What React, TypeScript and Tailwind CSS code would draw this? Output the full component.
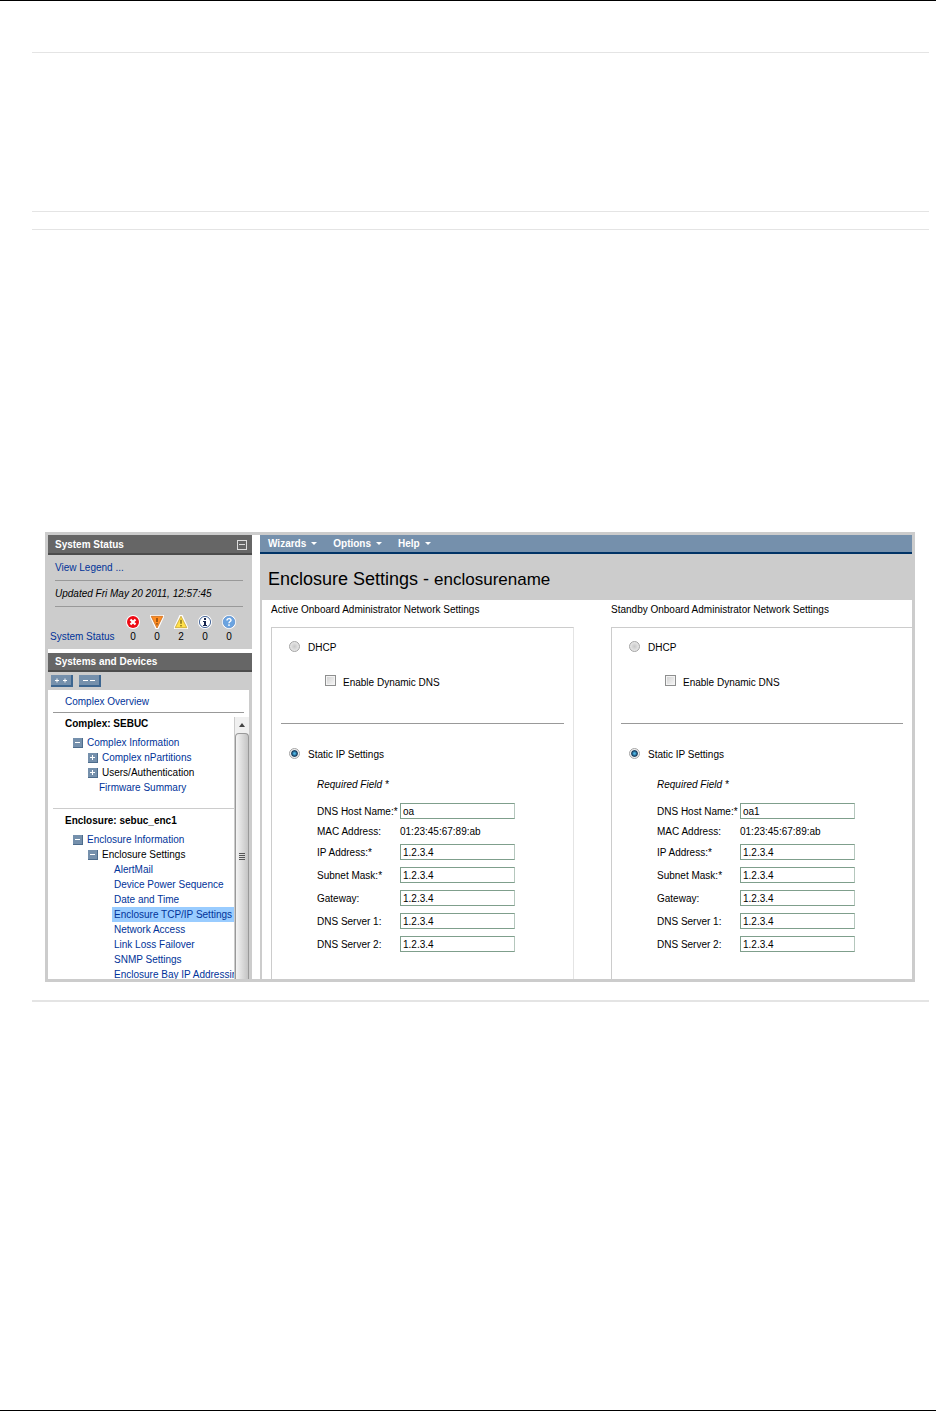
import { useState } from 'react';
import type { ReactNode } from 'react';

const fields = [
  { key: 'ip', label: 'IP Address:*' },
  { key: 'mask', label: 'Subnet Mask:*' },
  { key: 'gateway', label: 'Gateway:' },
  { key: 'dns1', label: 'DNS Server 1:' },
  { key: 'dns2', label: 'DNS Server 2:' },
];

const settingsLinks = [
  'AlertMail',
  'Device Power Sequence',
  'Date and Time',
  'Enclosure TCP/IP Settings',
  'Network Access',
  'Link Loss Failover',
  'SNMP Settings',
  'Enclosure Bay IP Addressing',
];

const statuses = [
  { name: 'Critical', count: 0, icon: <CriticalIcon /> },
  { name: 'Major', count: 0, icon: <MajorIcon /> },
  { name: 'Minor', count: 2, icon: <MinorIcon /> },
  { name: 'Informational', count: 0, icon: <InfoIcon /> },
  { name: 'Unknown', count: 0, icon: <UnknownIcon /> },
];

function CriticalIcon() {
  return (
    <svg width="14" height="14" viewBox="0 0 14 14" className="mx-auto block">
      <circle cx="7" cy="7" r="7" fill="#fff" />
      <circle cx="7" cy="7" r="6" fill="#ee0a14" />
      <path d="M4.5 4.5l5 5M9.5 4.5l-5 5" stroke="#fff" strokeWidth="2.2" />
    </svg>
  );
}

function MajorIcon() {
  return (
    <svg width="14" height="14" viewBox="0 0 14 14" className="mx-auto block">
      <path d="M0 0h14v2L8.5 14h-3L0 2z" fill="#fff" />
      <path d="M1.2 1.3h11.6L7 13z" fill="#ff8c22" stroke="#c86a1c" strokeWidth="0.8" />
      <path d="M7 3v4M7 8.2v1.4" stroke="#4a2400" strokeWidth="1" />
    </svg>
  );
}

function MinorIcon() {
  return (
    <svg width="14" height="14" viewBox="0 0 14 14" className="mx-auto block">
      <path d="M5.5 0h3L14 12v2H0v-2z" fill="#fff" />
      <path d="M7 1.2L12.8 12.7H1.2z" fill="#ffe04a" stroke="#c4a030" strokeWidth="0.8" />
      <path d="M7 4.8v4M7 10v1.4" stroke="#4a3c00" strokeWidth="1" />
    </svg>
  );
}

function InfoIcon() {
  return (
    <svg width="14" height="14" viewBox="0 0 14 14" className="mx-auto block">
      <circle cx="7" cy="7" r="7" fill="#fff" />
      <circle cx="7" cy="7" r="5.6" fill="#fff" stroke="#4a6a9c" strokeWidth="1" />
      <path d="M6 3h2v2H6zM5 6h3v4h1v1H5v-1h1V7H5z" fill="#16254d" />
    </svg>
  );
}

function UnknownIcon() {
  return (
    <svg width="14" height="14" viewBox="0 0 14 14" className="mx-auto block">
      <circle cx="7" cy="7" r="7" fill="#fff" />
      <circle cx="7" cy="7" r="5.8" fill="#6aa3e0" stroke="#4a80c4" strokeWidth="0.6" />
      <path d="M5 5.4C5 3 9 3 9 5.2 9 6.6 7 6.5 7 8.3M7 9.3v1.6" fill="none" stroke="#fff" strokeWidth="1.4" />
    </svg>
  );
}

function Toggle({ open, label }: { open?: boolean; label: string }) {
  return (
    <button
      aria-label={label}
      className="flex size-[10px] shrink-0 items-center justify-center border-r border-b border-[#4d6c8c] bg-[#7590ac]"
    >
      <svg width="7" height="7" viewBox="0 0 7 7">
        <path d={open ? 'M1 3.5h5' : 'M1 3.5h5M3.5 1v5'} stroke="#fff" strokeWidth="1" />
      </svg>
    </button>
  );
}

function TreeLink({ children, black }: { children: ReactNode; black?: boolean }) {
  return (
    <a href="#" className={`whitespace-nowrap ${black ? 'text-black' : 'text-[#003399]'}`}>
      {children}
    </a>
  );
}

function SystemStatus() {
  return (
    <section className="bg-[#ccc] pb-[5px]">
      <div className="flex h-5 items-center justify-between border-b-2 border-[#4c4c4c] bg-[#666] pt-px pr-[5px] pl-[7px]">
        <h2 className="font-bold text-white">System Status</h2>
        <button
          aria-label="Collapse"
          className="flex size-[10px] items-center justify-center border border-[#ddd]"
        >
          <span className="h-px w-[6px] bg-[#ddd]" />
        </button>
      </div>
      <div className="mr-[9px] ml-[7px]">
        <p className="h-[26px] border-b border-[#999] pt-[7px]">
          <TreeLink>View Legend ...</TreeLink>
        </p>
        <p className="h-[26px] border-b border-[#999] pt-[7px] italic">Updated Fri May 20 2011, 12:57:45</p>
      </div>
      <table className="mt-[7px] w-[193px] table-fixed text-center">
        <thead>
          <tr className="h-4">
            <td className="w-[73px]" />
            {statuses.map((s) => (
              <th key={s.name} aria-label={s.name} className="p-0">
                {s.icon}
              </th>
            ))}
          </tr>
        </thead>
        <tbody>
          <tr className="h-[14px]">
            <th className="pl-[2px] text-left font-normal">
              <TreeLink>System Status</TreeLink>
            </th>
            {statuses.map((s) => (
              <td key={s.name} className="p-0">
                {s.count}
              </td>
            ))}
          </tr>
        </tbody>
      </table>
    </section>
  );
}

function Scrollbar() {
  return (
    <div className="flex w-[15px] shrink-0 flex-col border-l border-[#ccc] bg-[#f0f0f0]">
      <button aria-label="Scroll up" className="flex h-4 items-center justify-center">
        <svg width="6" height="4" viewBox="0 0 6 4">
          <path d="M3 0l3 4H0z" fill="#444" />
        </svg>
      </button>
      <div className="flex flex-1 items-center justify-center rounded-t-sm border border-b-0 border-[#999] bg-linear-to-r from-[#f4f4f4] to-[#c4c4c4]">
        <div className="flex w-[6px] flex-col gap-px">
          <span className="h-px bg-[#555]" />
          <span className="h-px bg-[#555]" />
          <span className="h-px bg-[#555]" />
          <span className="h-px bg-[#555]" />
        </div>
      </div>
    </div>
  );
}

function DeviceTree() {
  return (
    <section className="flex min-h-0 flex-1 flex-col bg-[#ccc]">
      <div className="flex h-[19px] shrink-0 items-center border-b-2 border-[#4c4c4c] bg-[#666] pl-[7px]">
        <h2 className="font-bold text-white">Systems and Devices</h2>
      </div>
      <div className="flex h-[18px] shrink-0 items-center gap-[6px] pl-[3px]">
        <button
          aria-label="Expand all"
          className="flex h-3 w-[22px] items-center justify-center border-r-2 border-b-2 border-[#3d6690] bg-[#7590ac]"
        >
          <svg width="14" height="5" viewBox="0 0 14 5">
            <path d="M1 2.5h4M3 .5v4M9 2.5h4M11 .5v4" stroke="#fff" />
          </svg>
        </button>
        <button
          aria-label="Collapse all"
          className="flex h-3 w-[22px] items-center justify-center border-r-2 border-b-2 border-[#3d6690] bg-[#7590ac]"
        >
          <svg width="14" height="5" viewBox="0 0 14 5">
            <path d="M1 2.5h5M8 2.5h5" stroke="#fff" />
          </svg>
        </button>
      </div>
      <div className="mr-[3px] flex min-h-0 flex-1 flex-col bg-white pl-[5px]">
        <div className="mr-[5px] h-[23px] shrink-0 border-b border-[#999] pt-[6px] pl-3">
          <TreeLink>Complex Overview</TreeLink>
        </div>
        <div className="mt-1 flex min-h-0 flex-1">
          <nav className="flex min-w-0 flex-1 flex-col overflow-hidden">
            <h3 className="h-[18px] shrink-0 pt-px pl-3 text-[10px] font-bold">Complex: SEBUC</h3>
            <div className="flex h-[15px] shrink-0 items-center gap-1 pl-5">
              <Toggle open label="Collapse Complex Information" />
              <TreeLink>Complex Information</TreeLink>
            </div>
            <div className="flex h-[15px] shrink-0 items-center gap-1 pl-[35px]">
              <Toggle label="Expand Complex nPartitions" />
              <TreeLink>Complex nPartitions</TreeLink>
            </div>
            <div className="flex h-[15px] shrink-0 items-center gap-1 pl-[35px]">
              <Toggle label="Expand Users/Authentication" />
              <TreeLink black>Users/Authentication</TreeLink>
            </div>
            <div className="flex h-[15px] shrink-0 items-center pl-[46px]">
              <TreeLink>Firmware Summary</TreeLink>
            </div>
            <div className="mt-[13px] border-t border-[#ccc]" />
            <h3 className="mt-[5px] h-[18px] shrink-0 pt-px pl-3 text-[10px] font-bold">Enclosure: sebuc_enc1</h3>
            <div className="flex h-[15px] shrink-0 items-center gap-1 pl-5">
              <Toggle open label="Collapse Enclosure Information" />
              <TreeLink>Enclosure Information</TreeLink>
            </div>
            <div className="flex h-[15px] shrink-0 items-center gap-1 pl-[35px]">
              <Toggle open label="Collapse Enclosure Settings" />
              <TreeLink black>Enclosure Settings</TreeLink>
            </div>
            <ul className="min-h-0 flex-1 pl-[59px]">
              {settingsLinks.map((link) => (
                <li
                  key={link}
                  className={`flex h-[15px] items-center pl-[2px] ${
                    link === 'Enclosure TCP/IP Settings' ? 'bg-[#99ccff]' : ''
                  }`}
                >
                  <TreeLink>{link}</TreeLink>
                </li>
              ))}
            </ul>
          </nav>
          <Scrollbar />
        </div>
      </div>
    </section>
  );
}

const radioClass =
  'size-[11px] appearance-none rounded-full border border-[#a4a4a4] bg-radial from-[#c8c8c8] to-[#f4f4f4] checked:from-[#4fb8e8] checked:from-10% checked:via-[#123a5c] checked:via-45% checked:to-[#f0f0f0] checked:to-60%';
const inputClass =
  'h-4 w-[115px] border border-[#7f9f8c] border-r-[#b5c7bd] bg-white px-[2px] pt-px text-[10px] leading-3 outline-none';

function NetworkPanel({ id, title, host, last }: { id: string; title: string; host: string; last?: boolean }) {
  const [mode, setMode] = useState('static');

  return (
    <section className="flex min-w-0 flex-col">
      <h2 className="h-[27px] pt-1 whitespace-nowrap">{title}</h2>
      <div className={`flex-1 border-t border-l border-[#ccc] px-[9px] ${last ? '' : 'border-r border-r-[#e4e4e4]'}`}>
        <div className="flex h-9 items-center gap-2 pl-2">
          <input
            type="radio"
            id={`${id}-dhcp`}
            name={`${id}-mode`}
            checked={mode === 'dhcp'}
            onChange={() => setMode('dhcp')}
            className={radioClass}
          />
          <label htmlFor={`${id}-dhcp`} className="pt-[3px]">
            DHCP
          </label>
        </div>
        <div className="flex h-[60px] items-start gap-[7px] border-b border-[#999] pt-[11px] pl-11">
          <input
            type="checkbox"
            id={`${id}-ddns`}
            className="size-[11px] appearance-none border border-[#8e8f8f] bg-linear-to-br from-[#d0d0d0] to-[#f8f8f8] shadow-[inset_0_0_0_1px_#f4f4f4]"
          />
          <label htmlFor={`${id}-ddns`} className="pt-[2px]">
            Enable Dynamic DNS
          </label>
        </div>
        <div className="flex h-[55px] items-center gap-2 pt-[3px] pl-2">
          <input
            type="radio"
            id={`${id}-static`}
            name={`${id}-mode`}
            checked={mode === 'static'}
            onChange={() => setMode('static')}
            className={radioClass}
          />
          <label htmlFor={`${id}-static`} className="pt-[3px]">
            Static IP Settings
          </label>
        </div>
        <p className="h-5 pl-9 italic">Required Field *</p>
        <div className="grid grid-cols-[83px_115px] items-center pl-9">
          <label htmlFor={`${id}-host`} className="pt-[2px]">
            DNS Host Name:*
          </label>
          <div className="flex h-[23px] items-center">
            <input id={`${id}-host`} defaultValue={host} className={inputClass} />
          </div>
          <span className="h-[18px] pt-1">MAC Address:</span>
          <span className="h-[18px] pt-1">01:23:45:67:89:ab</span>
          {fields.map((f) => (
            <div key={f.key} className="col-span-2 grid h-[23px] grid-cols-subgrid items-center">
              <label htmlFor={`${id}-${f.key}`} className="pt-[2px]">
                {f.label}
              </label>
              <input id={`${id}-${f.key}`} defaultValue="1.2.3.4" className={inputClass} />
            </div>
          ))}
        </div>
      </div>
    </section>
  );
}

export default function App() {
  return (
    <div className="flex min-h-screen flex-col border-y border-black bg-white pr-[7px] pl-8 font-['Liberation_Sans',Arial,sans-serif] text-[10px] leading-3 text-black">
      <hr className="mt-[51px] border-[#e4e4e4]" />
      <hr className="mt-[158px] border-[#e4e4e4]" />
      <hr className="mt-[17px] border-[#e4e4e4]" />

      <main className="mt-[302px] mr-[14px] ml-[13px] flex h-[450px] border-3 border-[#ccc]">
        <aside className="flex w-[204px] shrink-0 flex-col gap-1">
          <SystemStatus />
          <DeviceTree />
        </aside>

        <div className="ml-2 flex min-w-0 flex-1 flex-col">
          <nav className="flex h-[19px] shrink-0 items-center gap-4 border-b-2 border-[#003366] bg-[#7590ac] pl-2 font-bold text-white">
            {['Wizards', 'Options', 'Help'].map((item) => (
              <button key={item} className="flex items-center gap-[5px]">
                {item}
                <svg width="6" height="3" viewBox="0 0 6 3">
                  <path d="M0 0h6L3 3z" fill="#fff" />
                </svg>
              </button>
            ))}
          </nav>
          <h1 className="h-[46px] shrink-0 bg-[#ccc] pt-[15px] pl-2 text-[18px] leading-5 whitespace-nowrap">
            Enclosure Settings - <span className="text-[17px]">enclosurename</span>
          </h1>
          <div className="grid min-h-0 flex-1 grid-cols-[303fr_301fr] gap-[37px] overflow-hidden border-l-2 border-[#ccc] pl-[9px]">
            <NetworkPanel id="active" title="Active Onboard Administrator Network Settings" host="oa" />
            <NetworkPanel id="standby" title="Standby Onboard Administrator Network Settings" host="oa1" last />
          </div>
        </div>
      </main>

      <hr className="mt-[18px] border-t-2 border-[#e4e4e4]" />
    </div>
  );
}
